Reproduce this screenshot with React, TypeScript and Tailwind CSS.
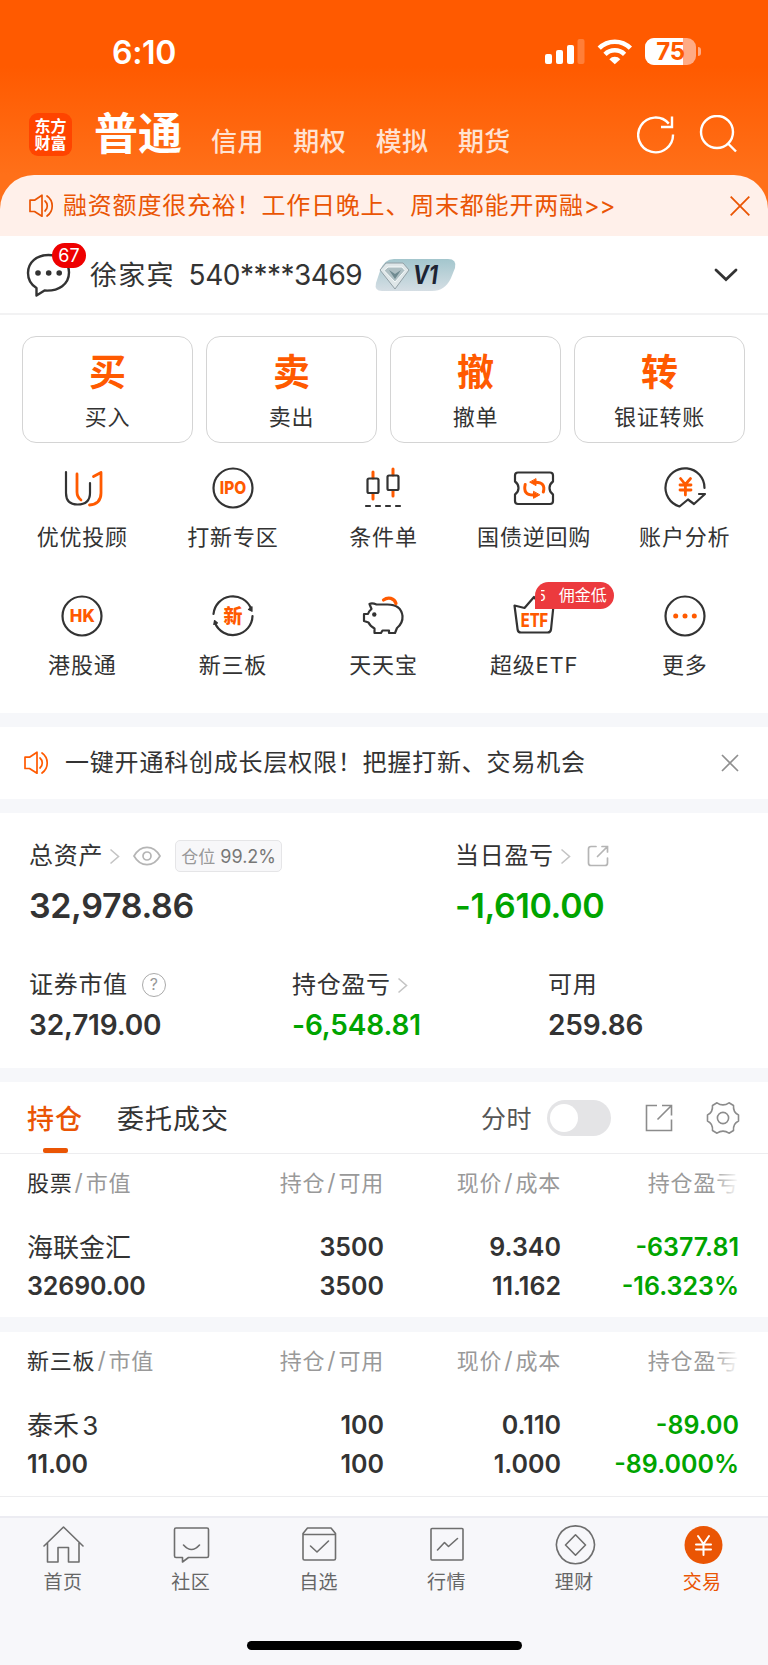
import React from 'react';

const ORANGE = '#ff5a00';
const INK = '#333333';

const App: React.FC = () => (
  <div className="w-[768px] h-[1665px] bg-white text-[#333333] overflow-hidden font-['Inter','Noto_Sans_CJK_SC',sans-serif] whitespace-nowrap">
    <Header />
    <AccountRow />
    <TradeButtons />
    <ShortcutGrid />
    <div className="h-[14px] bg-[#f6f7fa]" />
    <Notice />
    <div className="h-[14px] bg-[#f6f7fa]" />
    <Assets />
    <div className="h-[14px] bg-[#f6f7fa]" />
    <Positions />
    <BottomNav />
  </div>
);

const Header = () => (
  <div className="h-[236px] bg-[linear-gradient(180deg,#ff5a00_0px,#ff5a00_66px,#ff7019_175px,#ff7019_236px)] text-white">
    {/* Status bar */}
    <div className="flex h-[104px] pl-[112px] pr-[67px] justify-between">
      <div className="mt-[33px] h-10 leading-10 text-[32px] font-semibold tracking-[-0.3px]">6:10</div>
      <div className="mt-[38px] flex h-7">
        <svg width="40" height="27" viewBox="0 0 40 27" fill="#fff" className="mr-[12px]">
          <rect x="0" y="16" width="7" height="10" rx="2" />
          <rect x="11" y="12" width="7" height="14" rx="2" />
          <rect x="22" y="7" width="7" height="19" rx="2" />
          <rect x="32.5" y="1" width="7" height="25" rx="2" opacity=".22" />
        </svg>
        <svg width="36" height="27" viewBox="0 0 36 27" fill="none" stroke="#fff" strokeWidth="4.6" className="mr-[12px]">
          <path d="M2.2 10.2 A22 22 0 0 1 33.4 10.2" />
          <path d="M8 16.3 A14 14 0 0 1 27.6 16.3" />
          <path d="M12.3 21.2 a7.6 7.6 0 0 1 11 0 L17.8 26.3 Z" fill="#fff" stroke="none" />
        </svg>
        <div className="relative w-[51px] h-[27px] rounded-[9px] overflow-hidden bg-[#ffab85]">
          <div className="w-[38px] h-full bg-white" />
          <span className="absolute inset-0 text-center leading-[28px] text-[24px] font-bold text-[#ff5a00] tracking-[-0.3px]">75</span>
        </div>
        <div className="ml-[2px] mt-[9px] w-[3px] h-[9px] rounded-r-full bg-[#ffab85]" />
      </div>
    </div>
    {/* Market tabs */}
    <div className="flex h-[71px] pl-[29px] pr-[31px]">
      <div className="mt-[9px] size-[43px] rounded-[9px] bg-[#ff4400] pt-[5px] text-center text-[16px] leading-[17px] font-bold">
        东方<br />财富
      </div>
      <div className="ml-[22px] mt-[2px] h-[56px] leading-[56px] text-[44px] font-bold">普通</div>
      <div className="ml-[29px] mt-[18px] flex gap-[29.5px] h-[40px] leading-[40px] text-[26px] tracking-[0.4px] font-medium text-[#ffe2d2]">
        <span>信用</span>
        <span>期权</span>
        <span>模拟</span>
        <span>期货</span>
      </div>
      <svg width="38" height="40" viewBox="0 0 38 40" fill="none" stroke="#fff" strokeWidth="2.4" className="ml-auto mt-[11px]">
        <path d="M36 19.5 A17.4 17.4 0 1 1 31.8 8.6" />
        <path d="M35 1.5 V12 H24" />
      </svg>
      <svg width="38" height="40" viewBox="0 0 38 40" fill="none" stroke="#fff" strokeWidth="2.4" className="ml-[24px] mt-[11px]">
        <circle cx="18" cy="17" r="16" />
        <path d="M28.5 28 L37 36.5" />
      </svg>
    </div>
    {/* Promo strip */}
    <div className="flex items-center h-[61px] pl-[29px] pr-[18px] rounded-t-[34px] bg-[#fff0ea] text-[#ea5504]">
      <Speaker color="#ea5504" />
      <span className="ml-[9px] text-[24px] tracking-[0.8px] leading-[60px]">融资额度很充裕！工作日晚上、周末都能开两融<span className="tracking-[-0.2px]">&gt;&gt;</span></span>
      <svg width="20" height="20" viewBox="0 0 20 20" stroke="#ea5504" strokeWidth="1.8" className="ml-auto">
        <path d="M.7 .7 L19.3 19.3 M19.3 .7 L.7 19.3" />
      </svg>
    </div>
  </div>
);

const Speaker = ({ color }: { color: string }) => (
  <svg width="25" height="24" viewBox="0 0 25 24" fill="none" stroke={color} strokeWidth="1.7" strokeLinejoin="round" strokeLinecap="round">
    <path d="M1 6.2 H5.5 L13 1.2 V22.2 L5.5 17.5 H1 Z" />
    <path d="M16 7 A6.6 6.6 0 0 1 16 17" />
    <path d="M18 2 A12.2 12.2 0 0 1 18 22" />
  </svg>
);

const AccountRow = () => (
  <div className="flex h-[79px] border-b-2 border-[#f2f2f3] pl-[26px] pr-[29px]">
    <div className="relative w-[64px]">
      <svg width="46" height="46" viewBox="0 0 46 46" fill="none" stroke={INK} strokeWidth="2.4" strokeLinejoin="round" className="mt-[16px]">
        <path d="M22.5 3 C34 3 43 10 43 20.5 C43 32 33 39.5 18.5 38.5 L10.5 43.5 V36 C5.5 33 2 28 2 21 C2 10 11 3 22.5 3 Z" />
        <g fill={INK} stroke="none">
          <circle cx="12" cy="21" r="2.8" />
          <circle cx="22.7" cy="21" r="2.8" />
          <circle cx="33.2" cy="21" r="2.8" />
        </g>
      </svg>
      <span className="absolute left-[26px] top-[7px] w-[34px] h-[25px] rounded-full bg-[#ee0000] text-white text-[18px] leading-[26px] text-center">67</span>
    </div>
    <span className="text-[27px] tracking-[1.2px] leading-[79px]">徐家宾</span>
    <span className="ml-[14px] text-[28px] tracking-[-0.5px] leading-[79px]">540****3469</span>
    <svg width="84" height="34" viewBox="0 0 84 34" className="ml-[12px] mt-[22px]">
      <defs>
        <linearGradient id="vip" x1="0" y1="0" x2="0" y2="1">
          <stop offset="0" stopColor="#a3c6cd" />
          <stop offset="1" stopColor="#d5dee4" />
        </linearGradient>
      </defs>
      <path d="M20 1 H74 Q83 1 81 10 L77 20 Q71 33 58 33 H8 Q0 33 2 25 L6 13 Q10 1 20 1 Z" fill="url(#vip)" />
      <path d="M12 5 H29 L35 12 L21 31 L6 12 Z" fill="#dfe7e9" stroke="#92a0a6" strokeWidth="1" />
      <path d="M14 9 H28 L31 12.5 L21 24 L10 12.5 Z" fill="#aebfc3" stroke="#f6fafa" strokeWidth="1" />
      <path d="M15 12 L21 16 L27 12 L21 21 Z" fill="#6f8a90" />
      <text x="39" y="26" fontSize="25" fontWeight="700" fontStyle="italic" fill="#1d2433" textLength="25" lengthAdjust="spacingAndGlyphs">V1</text>
    </svg>
    <svg width="26" height="18" viewBox="0 0 26 18" fill="none" stroke={INK} strokeWidth="2.8" strokeLinecap="round" className="ml-auto mt-[30px]">
      <path d="M3 4 L13 13.5 L23 4" />
    </svg>
  </div>
);

const trades = [
  { mark: '买', label: '买入' },
  { mark: '卖', label: '卖出' },
  { mark: '撤', label: '撤单' },
  { mark: '转', label: '银证转账' },
];

const TradeButtons = () => (
  <div className="grid grid-cols-4 gap-[13px] pl-[22px] pr-[23px] pt-[21px]">
    {trades.map((t) => (
      <div key={t.mark} className="h-[107px] rounded-[14px] border border-[#d4d4d4] text-center">
        <div className="mt-[8px] h-[56px] leading-[56px] text-[37px] font-bold text-[#ff5a00]">{t.mark}</div>
        <div className="h-[32px] leading-[32px] text-[22px] tracking-[0.8px]">{t.label}</div>
      </div>
    ))}
  </div>
);

const icons: Record<string, React.ReactNode> = {
  advisor: (
    <>
      <path d="M6 6 V27 Q6 38.500 17.500 38.500 Q30 38.500 30 27 V17" />
      <path d="M17 8 V26 Q17 31 21 34 M29.500 39 Q41 38 41 27 V6.500 L33.500 10.500" stroke={ORANGE} strokeWidth="2.800" />
    </>
  ),
  ipo: (
    <>
      <circle cx="22" cy="22" r="19.500" />
      <text x="8.800" y="28.300" fontSize="17.500" fontWeight="800" fill={ORANGE} stroke="none" textLength="26.500" lengthAdjust="spacingAndGlyphs">IPO</text>
    </>
  ),
  candle: (
    <>
      <path d="M12 6 V12 M12 28 V33 M32 3 V9 M32 25 V30" stroke={ORANGE} strokeWidth="3" />
      <rect x="6.500" y="12.500" width="11" height="14.500" rx="1.500" />
      <rect x="26.500" y="9.500" width="11" height="14.500" rx="1.500" />
      <path d="M5 40 H9 M15 40 H19 M25 40 H29 M35 40 H39" />
    </>
  ),
  repo: (
    <>
      <path d="M6 6.500 H38 Q41 6.500 41 9.500 V15.500 Q37.500 18 37.500 22 Q37.500 26 41 28.500 V35 Q41 38 38 38 H6 Q3 38 3 35 V28.500 Q6.500 26 6.500 22 Q6.500 18 3 15.500 V9.500 Q3 6.500 6 6.500 Z" />
      <path d="M13.200 18.500 Q10.800 29 21 29 M31.300 26 Q34 16.300 23.500 16.300" stroke={ORANGE} strokeWidth="3" />
      <path d="M24 13 V19.600 L18 16.300 Z M21.500 25.700 V32.300 L27.500 29 Z" fill={ORANGE} stroke={ORANGE} strokeWidth="1" />
    </>
  ),
  analysis: (
    <>
      <path d="M41.500 22 A19.500 19.500 0 1 0 16.500 40.500 L25 33.500 L31 38 L42 28 H36" />
      <path d="M17.500 12.500 L22.300 18.500 L27.500 12.500 M17 19 H28 M17 24 H28 M22.400 18.500 V29" stroke={ORANGE} strokeWidth="2.800" />
    </>
  ),
  hk: (
    <>
      <circle cx="22" cy="22" r="19.500" />
      <text x="9.800" y="28.400" fontSize="17.500" fontWeight="800" fill={ORANGE} stroke="none" textLength="25" lengthAdjust="spacingAndGlyphs">HK</text>
    </>
  ),
  neeq: (
    <>
      <path d="M2.500 20 A19.500 19.500 0 0 1 40 14.500 M41.500 22 A19.500 19.500 0 0 1 4 29" />
      <path d="M37.500 15.500 L41 12.800 V17.300 Z M2.800 30.500 L3.500 26.500 L6.500 29 Z" fill={INK} strokeWidth="1.200" />
      <text x="22" y="28.800" fontSize="19" fontWeight="900" fill={ORANGE} stroke="none" textAnchor="middle">新</text>
    </>
  ),
  piggy: (
    <>
      <path d="M15.500 10.500 Q11 8.500 8.500 10 L10.500 15 Q8 17 7 20 H3 V27 L7.500 28.500 Q9 32 13.500 34.500 V39 H20 L21.500 36.500 H28 V39 H34 L36 34 Q42 29 41.500 22 Q40 10.500 26.500 10.500 Z" />
      <circle cx="13.300" cy="20.500" r="2.200" fill={INK} stroke="none" />
      <path d="M22.500 6 C27 2.500 33.500 4 35 9.500" stroke={ORANGE} strokeWidth="3.200" />
    </>
  ),
  etf: (
    <>
      <path d="M2.500 11.500 L12.500 14 L22 3 L31 14 L41.500 11.500 L39 35.500 Q38.500 38.500 35.500 38.500 H9 Q6 38.500 5.600 35.500 Z" />
      <text x="8.700" y="32.700" fontSize="18.500" fontWeight="800" fill={ORANGE} stroke="none" textLength="27.500" lengthAdjust="spacingAndGlyphs">ETF</text>
    </>
  ),
  more: (
    <>
      <circle cx="22" cy="22" r="19.500" />
      <g fill={ORANGE} stroke="none">
        <circle cx="12.700" cy="22" r="2.500" />
        <circle cx="22" cy="22" r="2.500" />
        <circle cx="31.300" cy="22" r="2.500" />
      </g>
    </>
  ),
};

const shortcuts = [
  { icon: 'advisor', label: '优优投顾' },
  { icon: 'ipo', label: '打新专区' },
  { icon: 'candle', label: '条件单' },
  { icon: 'repo', label: '国债逆回购' },
  { icon: 'analysis', label: '账户分析' },
  { icon: 'hk', label: '港股通' },
  { icon: 'neeq', label: '新三板' },
  { icon: 'piggy', label: '天天宝' },
  { icon: 'etf', label: '超级ETF', tag: '佣金低' },
  { icon: 'more', label: '更多' },
];

const ShortcutGrid = () => (
  <div className="grid grid-cols-5 h-[270px] pl-[7px] pr-[8px] pt-[23px]">
    {shortcuts.map((s) => (
      <div key={s.icon} className="relative h-[128px] flex flex-col items-center">
        <svg width="44" height="44" viewBox="0 0 44 44" fill="none" stroke={INK} strokeWidth="2.200" strokeLinejoin="round" strokeLinecap="round">
          {icons[s.icon]}
        </svg>
        <div className="mt-[11px] h-[32px] leading-[32px] text-[22px] tracking-[0.8px]">{s.label}</div>
        {s.tag && (
          <div className="absolute left-[76px] top-[-12px] w-[79px] h-[27px] flex rounded-[14px] rounded-bl-none bg-[#ec3a3e] text-white text-[16px] leading-[27px]">
            <span className="ml-[6px] w-[5px] overflow-hidden flex justify-end text-[15px]">5</span>
            <span className="ml-[13px]">{s.tag}</span>
          </div>
        )}
      </div>
    ))}
  </div>
);

const Notice = () => (
  <div className="flex items-center h-[72px] pl-[24px] pr-[29px]">
    <Speaker color={ORANGE} />
    <span className="ml-[16px] text-[24px] tracking-[0.8px] leading-[72px]">一键开通科创成长层权限！把握打新、交易机会</span>
    <svg width="18" height="18" viewBox="0 0 18 18" stroke="#8f8f8f" strokeWidth="1.7" className="ml-auto">
      <path d="M1 1 L17 17 M17 1 L1 17" />
    </svg>
  </div>
);

const Arrow = () => (
  <svg width="11" height="17" viewBox="0 0 11 17" fill="none" stroke="#c4c4c4" strokeWidth="1.6" className="ml-[6px]">
    <path d="M1.500 1.500 L9.500 8.500 L1.500 15.500" />
  </svg>
);

const Assets = () => (
  <div className="h-[255px] pl-[29px] pt-[25px]">
    <div className="flex h-[88px]">
      <div className="w-[426px]">
        <div className="flex items-center h-9 text-[24px] tracking-[0.7px]">
          总资产
          <Arrow />
          <svg width="28" height="20" viewBox="0 0 28 20" fill="none" stroke="#b5b5b5" strokeWidth="1.700" className="ml-[13px]">
            <path d="M1 10 Q6 1.300 14 1.300 Q22 1.300 27 10 Q22 18.700 14 18.700 Q6 18.700 1 10 Z" />
            <circle cx="14" cy="10" r="4" />
          </svg>
          <span className="ml-[14px] w-[107px] h-[32px] rounded-[5px] border border-[#e5e5e7] bg-[#f7f7f9] text-center text-[#777777] text-[18px] leading-[32px] tracking-normal">
            <span className="text-[17px] text-[#999999]">仓位</span> 99.2%
          </span>
        </div>
        <div className="mt-[12px] h-10 leading-10 text-[34px] font-semibold tracking-[-0.35px]">32,978.86</div>
      </div>
      <div>
        <div className="flex items-center h-9 text-[24px] tracking-[0.7px]">
          当日盈亏
          <Arrow />
          <svg width="22" height="22" viewBox="0 0 22 22" fill="none" stroke="#b5b5b5" strokeWidth="1.700" strokeLinecap="round" className="ml-[16px]">
            <path d="M9 1.500 H4 Q1.500 1.500 1.500 4 V18 Q1.500 20.500 4 20.500 H18 Q20.500 20.500 20.500 18 V13 M10.500 11.500 L20 2 M15 1.500 H20.500 V7" />
          </svg>
        </div>
        <div className="mt-[12px] h-10 leading-10 text-[34px] font-semibold tracking-[-0.35px] text-[#00a400]">-1,610.00</div>
      </div>
    </div>
    <div className="flex pt-[41px]">
      <div className="w-[263px]">
        <div className="flex items-center h-9 text-[24px] tracking-[0.7px]">
          证券市值
          <span className="ml-[14px] size-6 rounded-full border-[1.5px] border-[#aaaaaa] text-[#999999] text-[16px] leading-[21px] text-center tracking-normal">?</span>
        </div>
        <div className="mt-[4px] h-9 leading-9 text-[28px] font-semibold tracking-[-0.15px]">32,719.00</div>
      </div>
      <div className="w-[256px]">
        <div className="flex items-center h-9 text-[24px] tracking-[0.7px]">
          持仓盈亏
          <Arrow />
        </div>
        <div className="mt-[4px] h-9 leading-9 text-[28px] font-semibold tracking-[-0.15px] text-[#00a400]">-6,548.81</div>
      </div>
      <div>
        <div className="flex items-center h-9 text-[24px] tracking-[0.7px]">可用</div>
        <div className="mt-[4px] h-9 leading-9 text-[28px] font-semibold tracking-[-0.15px]">259.86</div>
      </div>
    </div>
  </div>
);

const Positions = () => (
  <div className="h-[434px]">
    <div className="flex h-[72px] border-b border-[#ededef] pl-[27px] pr-[28px]">
      <div className="relative text-[27px] font-medium tracking-[1px] leading-[75px] text-[#ea5504]">
        持仓
        <span className="absolute left-[16px] bottom-0 w-[25px] h-[5px] rounded-[2px] bg-[#ea5504]" />
      </div>
      <div className="ml-[34px] text-[27px] tracking-[1px] leading-[75px]">委托成交</div>
      <div className="ml-auto text-[25px] tracking-[0.5px] leading-[74px] text-[#555555]">分时</div>
      <div className="ml-[15px] mt-[18px] w-[64px] h-[36px] rounded-full bg-[#e4e4e6] py-[4px] px-[3px]">
        <div className="size-[28px] rounded-full bg-white" />
      </div>
      <svg width="28" height="28" viewBox="0 0 28 28" fill="none" stroke="#8c8c8c" strokeWidth="1.600" className="ml-[34px] mt-[22px]">
        <path d="M12 1.500 H1.500 V26.500 H26.500 V15.500 M12.500 15.500 L26 2 M17 1.500 H26.500 V11.500" />
      </svg>
      <svg width="34" height="34" viewBox="0 0 34 34" fill="none" stroke="#8c8c8c" strokeWidth="1.600" strokeLinejoin="round" className="ml-[33px] mt-[19px]">
        <path d="M11 1.800 Q17 6 23 1.800 L27.500 4.500 Q27 11.500 32.500 14 V20 Q27 22.500 27.500 29.500 L23 32.200 Q17 28 11 32.200 L6.500 29.500 Q7 22.500 1.500 20 V14 Q7 11.500 6.500 4.500 Z" />
        <circle cx="17" cy="17" r="5.600" />
      </svg>
    </div>
    <div className="h-[163px]">
      <HoldingTable title="股票" name="海联金汇" value="32690.00" count="3500" price="9.340" cost="11.162" profit="-6377.81" rate="-16.323%" />
    </div>
    <div className="h-[15px] bg-[#f6f7fa]" />
    <div className="h-[165px] border-b border-[#ededef]">
      <HoldingTable title="新三板" name="泰禾 3" value="11.00" count="100" price="0.110" cost="1.000" profit="-89.00" rate="-89.000%" />
    </div>
  </div>
);

const HoldingTable = ({ title, name, value, count, price, cost, profit, rate }: any) => (
  <div className="px-[27px] pt-[11px]">
    <div className="grid grid-cols-[179px_178px_177px_178px] h-9 leading-9 text-[22px] tracking-[0.8px] text-[#999999]">
      <div><span className="text-[#333333]">{title}</span><Slash />市值</div>
      <div className="text-right">持仓<Slash />可用</div>
      <div className="text-right">现价<Slash />成本</div>
      <div className="relative text-right">
        持仓盈亏
        <span className="absolute right-0 top-0 w-[26px] h-full bg-gradient-to-r from-white/0 to-white" />
      </div>
    </div>
    <div className="mt-[27px] grid grid-cols-[179px_178px_177px_178px] leading-[39px] text-[25px] font-semibold text-right">
      <div className="text-left text-[26px] font-normal [word-spacing:-4px]">{name}</div>
      <div>{count}</div>
      <div>{price}</div>
      <div className="text-[#00a400]">{profit}</div>
      <div className="text-left tracking-[-0.1px]">{value}</div>
      <div>{count}</div>
      <div>{cost}</div>
      <div className="text-[#00a400]">{rate}</div>
    </div>
  </div>
);

const Slash = () => <span className="mx-[2px] text-[23px]">/</span>;

const navItems = [
  {
    label: '首页',
    icon: <path d="M1 21 L20.500 2 L40 21 M4.500 18 V37 H15 V22.500 H25.500 V37 H36 V18" />,
  },
  {
    label: '社区',
    icon: <path d="M5 3 H36 Q37.500 3 37.500 4.500 V31 Q37.500 32.500 36 32.500 H17.500 L11.500 37 V32.500 H5 Q3.500 32.500 3.500 31 V4.500 Q3.500 3 5 3 Z M12.500 20 Q20.500 29 28.500 20" />,
  },
  {
    label: '自选',
    icon: <path d="M4 8.500 L8.500 3 H32 L36.500 8.500 V33.500 Q36.500 35 35 35 H5.500 Q4 35 4 33.500 Z M4 9.500 H36.500 M11.500 21 L18 27 L29.500 16" />,
  },
  {
    label: '行情',
    icon: <path d="M5 3.500 H35 Q36 3.500 36 4.500 V34 Q36 35 35 35 H5 Q4 35 4 34 V4.500 Q4 3.500 5 3.500 Z M10.500 25 L17.500 17.500 L21.500 21.500 L30.500 13.500" />,
  },
  {
    label: '理财',
    icon: <path d="M20.500 0.900 A18.900 18.900 0 1 1 20.400 0.900 Z M20.500 9.800 L30.500 20 L20.500 30.200 L10.500 20 Z" />,
  },
  {
    label: '交易',
    active: true,
    icon: (
      <>
        <circle cx="20.500" cy="20" r="19" fill="#ea5504" stroke="none" />
        <path d="M15 11 L20.500 19 L26 11 M13 19.500 H28 M13 24.500 H28 M20.500 19 V30" stroke="#fff" strokeWidth="2" />
      </>
    ),
  },
];

const BottomNav = () => (
  <div className="h-[149px] bg-[#f7f7fa] border-t-2 border-[#ececf2]">
    <div className="grid grid-cols-6 pt-[7px] pr-[1px] h-[123px]">
      {navItems.map((n) => (
        <div key={n.label} className={`flex flex-col items-center ${n.active ? 'text-[#ea5504]' : 'text-[#666666]'}`}>
          <svg width="41" height="40" viewBox="0 0 41 40" fill="none" stroke="#6e6e6e" strokeWidth="1.600" strokeLinejoin="round" strokeLinecap="round">
            {n.icon}
          </svg>
          <span className="mt-[4px] mr-[2px] h-7 leading-7 text-[19px] tracking-[0.4px]">{n.label}</span>
        </div>
      ))}
    </div>
    <div className="mx-auto w-[275px] h-[9px] rounded-full bg-black" />
  </div>
);

export default App;
